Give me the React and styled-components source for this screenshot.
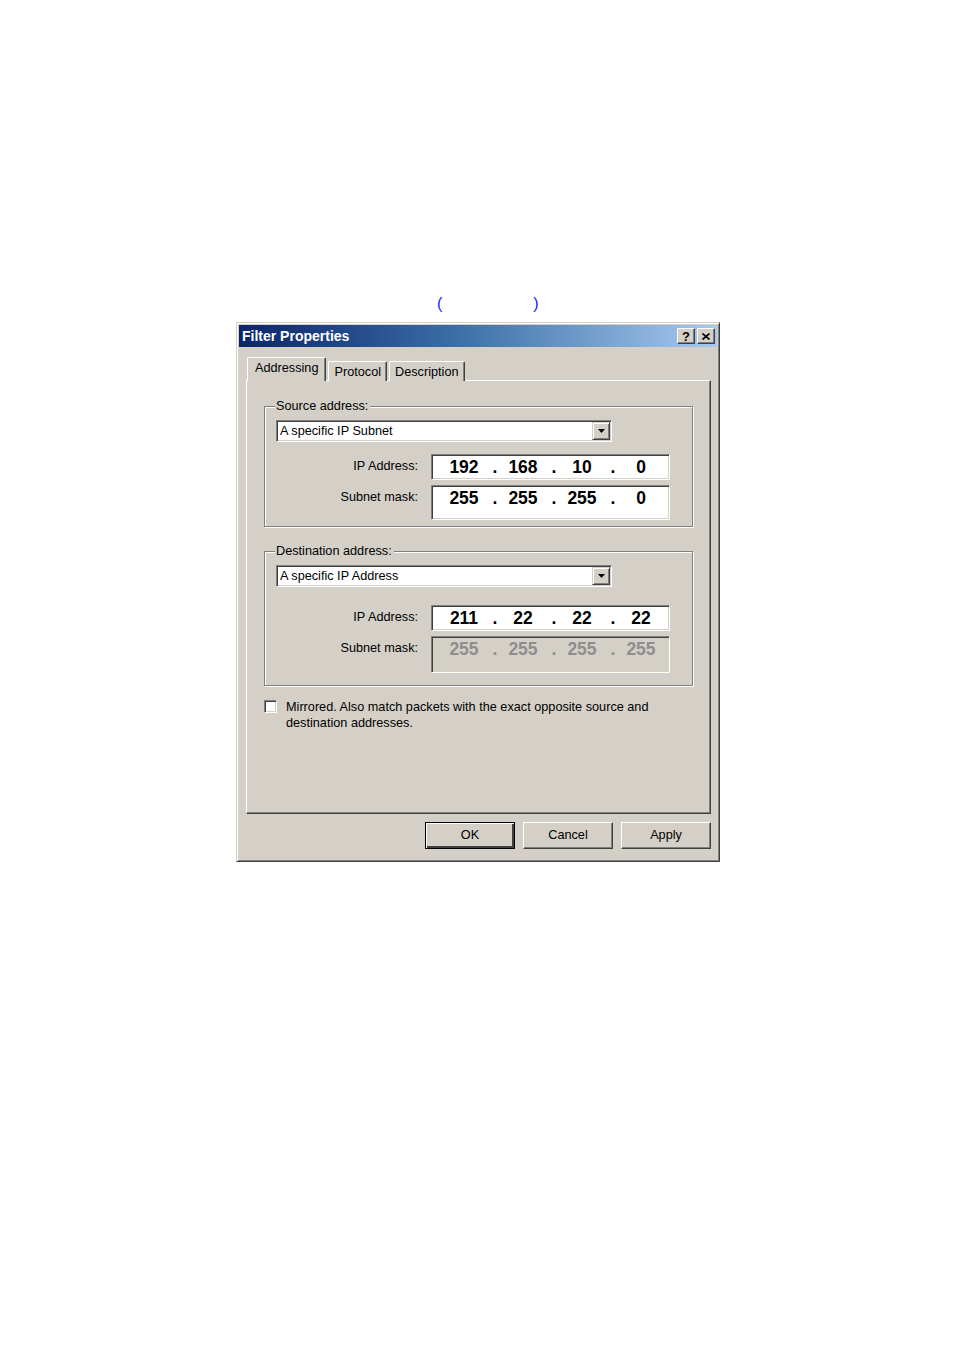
import React from 'react'
import styled, { createGlobalStyle } from 'styled-components'

const GlobalStyle = createGlobalStyle`
  body {
    margin: 0;
    background: #fff;
    font-family: "Liberation Sans", Arial, sans-serif;
  }
`

const Page = styled.div`
  width: 954px;
  min-height: 1350px;
  padding-top: 295px;
  box-sizing: border-box;
`

const Caption = styled.div`
  display: flex;
  gap: 91px;
  padding-left: 437px;
  height: 18px;
  font-size: 16px;
  line-height: 18px;
  color: #1a1aff;
  margin-bottom: 9px;
`

const Dialog = styled.div`
  margin-left: 236px;
  width: 484px;
  height: 540px;
  box-sizing: border-box;
  background: #d4d0c8;
  border: 1px solid;
  border-color: #d4d0c8 #404040 #404040 #d4d0c8;
  box-shadow: inset 1px 1px 0 #fff, inset -1px -1px 0 #808080;
  padding: 2px;
  display: flex;
  flex-direction: column;
  font-size: 12.7px;
  color: #000;
`

const TitleBar = styled.div`
  height: 22px;
  display: flex;
  align-items: center;
  padding: 0 2px 0 3px;
  background: linear-gradient(to right, #0a246a 0%, #3a6ea5 45%, #a6caf0 100%);
`

const Title = styled.div`
  flex: 1;
  color: #fff;
  font-weight: bold;
  font-size: 14px;
`

const CaptionButton = styled.div`
  width: 18px;
  height: 16px;
  box-sizing: border-box;
  margin-left: ${p => p.$gap || 0}px;
  background: #d4d0c8;
  border: 1px solid;
  border-color: #fff #404040 #404040 #fff;
  box-shadow: inset -1px -1px 0 #808080;
  display: flex;
  align-items: center;
  justify-content: center;
  font-weight: bold;
  font-size: 13px;
  line-height: 1;
`

const Body = styled.div`
  flex: 1;
  display: flex;
  flex-direction: column;
  padding: 10px 6px 0 7px;
`

const TabStrip = styled.div`
  display: flex;
  align-items: flex-end;
  height: 24px;
  padding-left: 1px;
  position: relative;
  z-index: 1;
  margin-bottom: -1px;
`

const Tab = styled.div`
  height: ${p => (p.$active ? 24 : 20)}px;
  box-sizing: border-box;
  padding: 0 ${p => (p.$active ? 7 : 5)}px;
  margin-right: 2px;
  background: #d4d0c8;
  border-top: 1px solid #fff;
  border-left: 1px solid #fff;
  border-right: 1px solid #404040;
  box-shadow: inset -1px 0 0 #808080;
  border-radius: 2px 2px 0 0;
  display: flex;
  align-items: center;
  padding-bottom: ${p => (p.$active ? 3 : 0)}px;
  white-space: nowrap;
`

const Panel = styled.div`
  height: 434px;
  box-sizing: border-box;
  border: 1px solid;
  border-color: #fff #404040 #404040 #fff;
  box-shadow: inset -1px -1px 0 #808080;
  padding: 17px 17px 0 17px;
  display: flex;
  flex-direction: column;
`

const Group = styled.fieldset`
  margin: ${p => p.$top}px 0 0 0;
  padding: 6px 11px ${p => p.$bottom}px 11px;
  border: 1px solid #808080;
  box-shadow: inset 1px 1px 0 #fff, 1px 1px 0 #fff;
  min-width: 0;
`

const Legend = styled.legend`
  padding: 0 2px 0 1px;
  margin-left: -1px;
  line-height: 16px;
  background: #d4d0c8;
`

const Combo = styled.div`
  width: 336px;
  height: 22px;
  box-sizing: border-box;
  background: #fff;
  border: 1px solid;
  border-color: #808080 #fff #fff #808080;
  box-shadow: inset 1px 1px 0 #404040, inset -1px -1px 0 #d4d0c8;
  display: flex;
  align-items: center;
  padding: 1px;
`

const ComboText = styled.div`
  flex: 1;
  padding-left: 2px;
`

const ComboArrow = styled.div`
  width: 18px;
  height: 18px;
  box-sizing: border-box;
  background: #d4d0c8;
  border: 1px solid;
  border-color: #d4d0c8 #404040 #404040 #d4d0c8;
  box-shadow: inset 1px 1px 0 #fff, inset -1px -1px 0 #808080;
  display: flex;
  align-items: center;
  justify-content: center;
`

const FieldRow = styled.div`
  display: flex;
  align-items: flex-start;
  margin-top: ${p => p.$top}px;
`

const FieldLabel = styled.div`
  width: 142px;
  text-align: right;
  padding-top: 4px;
  line-height: 16px;
  margin-right: 13px;
`

const IpField = styled.div`
  width: 239px;
  height: ${p => p.$h}px;
  box-sizing: border-box;
  background: ${p => (p.$disabled ? '#d4d0c8' : '#fff')};
  border: 1px solid;
  border-color: #808080 #fff #fff #808080;
  box-shadow: inset 1px 1px 0 #404040, inset -1px -1px 0 #d4d0c8;
  display: flex;
  padding: 1px 0 0 9px;
  font-weight: bold;
  font-size: 17.5px;
  line-height: 22px;
  color: ${p => (p.$disabled ? '#8e8e8e' : '#000')};
`

const Octet = styled.span`
  width: 46px;
  text-align: center;
`

const Dot = styled.span`
  width: 13px;
  padding-left: 3px;
  box-sizing: border-box;
  text-align: center;
`

const CheckRow = styled.label`
  display: flex;
  align-items: flex-start;
  margin-top: 13px;
  line-height: 16px;
`

const Check = styled.span`
  width: 13px;
  height: 13px;
  box-sizing: border-box;
  background: #fff;
  border: 1px solid;
  border-color: #808080 #fff #fff #808080;
  box-shadow: inset 1px 1px 0 #404040, inset -1px -1px 0 #d4d0c8;
  margin: 1px 9px 0 0;
  flex-shrink: 0;
`

const CheckText = styled.span`
  width: 385px;
`

const Footer = styled.div`
  display: flex;
  justify-content: flex-end;
  gap: 8px;
  padding: 8px 0 0 0;
`

const Button = styled.div`
  width: 90px;
  height: 27px;
  box-sizing: border-box;
  background: #d4d0c8;
  border: 1px solid;
  border-color: ${p => (p.$default ? '#000' : '#fff #404040 #404040 #fff')};
  box-shadow: ${p =>
    p.$default
      ? 'inset 1px 1px 0 #fff, inset -2px -2px 0 #404040, inset -1px -1px 0 #808080'
      : 'inset -1px -1px 0 #808080'};
  display: flex;
  align-items: center;
  justify-content: center;
  padding-bottom: 1px;
`

const ArrowIcon = () => (
  <svg width="7" height="4" viewBox="0 0 7 4">
    <path d="M0 0h7L3.5 4z" fill="#000" />
  </svg>
)

const CloseIcon = () => (
  <svg width="8" height="7" viewBox="0 0 8 7">
    <path d="M0.5 0.5L7.5 6.5M7.5 0.5L0.5 6.5" stroke="#000" strokeWidth="1.6" />
  </svg>
)

const IpAddress = ({ parts, height, disabled }) => (
  <IpField $h={height} $disabled={disabled}>
    {parts.map((p, i) => (
      <React.Fragment key={i}>
        <Octet>{p}</Octet>
        {i < 3 && <Dot>.</Dot>}
      </React.Fragment>
    ))}
  </IpField>
)

const AddressGroup = ({ legend, choice, ip, mask, maskDisabled, top, bottom, rowTop, maskHeight }) => (
  <Group $top={top} $bottom={bottom}>
    <Legend>{legend}</Legend>
    <Combo>
      <ComboText>{choice}</ComboText>
      <ComboArrow>
        <ArrowIcon />
      </ComboArrow>
    </Combo>
    <FieldRow $top={rowTop}>
      <FieldLabel>IP Address:</FieldLabel>
      <IpAddress parts={ip} height={26} />
    </FieldRow>
    <FieldRow $top={5}>
      <FieldLabel>Subnet mask:</FieldLabel>
      <IpAddress parts={mask} height={maskHeight} disabled={maskDisabled} />
    </FieldRow>
  </Group>
)

export default function App() {
  return (
    <Page>
      <GlobalStyle />
      <Caption>
        <span>(</span>
        <span>)</span>
      </Caption>
      <Dialog>
        <TitleBar>
          <Title>Filter Properties</Title>
          <CaptionButton>?</CaptionButton>
          <CaptionButton $gap={2}>
            <CloseIcon />
          </CaptionButton>
        </TitleBar>
        <Body>
          <TabStrip>
            <Tab $active>Addressing</Tab>
            <Tab>Protocol</Tab>
            <Tab>Description</Tab>
          </TabStrip>
          <Panel>
            <AddressGroup
              legend="Source address:"
              choice="A specific IP Subnet"
              ip={['192', '168', '10', '0']}
              mask={['255', '255', '255', '0']}
              top={0}
              bottom={6}
              rowTop={12}
              maskHeight={35}
            />
            <AddressGroup
              legend="Destination address:"
              choice="A specific IP Address"
              ip={['211', '22', '22', '22']}
              mask={['255', '255', '255', '255']}
              maskDisabled
              top={16}
              bottom={12}
              rowTop={18}
              maskHeight={37}
            />
            <CheckRow>
              <Check />
              <CheckText>
                Mirrored. Also match packets with the exact opposite source and destination addresses.
              </CheckText>
            </CheckRow>
          </Panel>
          <Footer>
            <Button $default>OK</Button>
            <Button>Cancel</Button>
            <Button>Apply</Button>
          </Footer>
        </Body>
      </Dialog>
    </Page>
  )
}
